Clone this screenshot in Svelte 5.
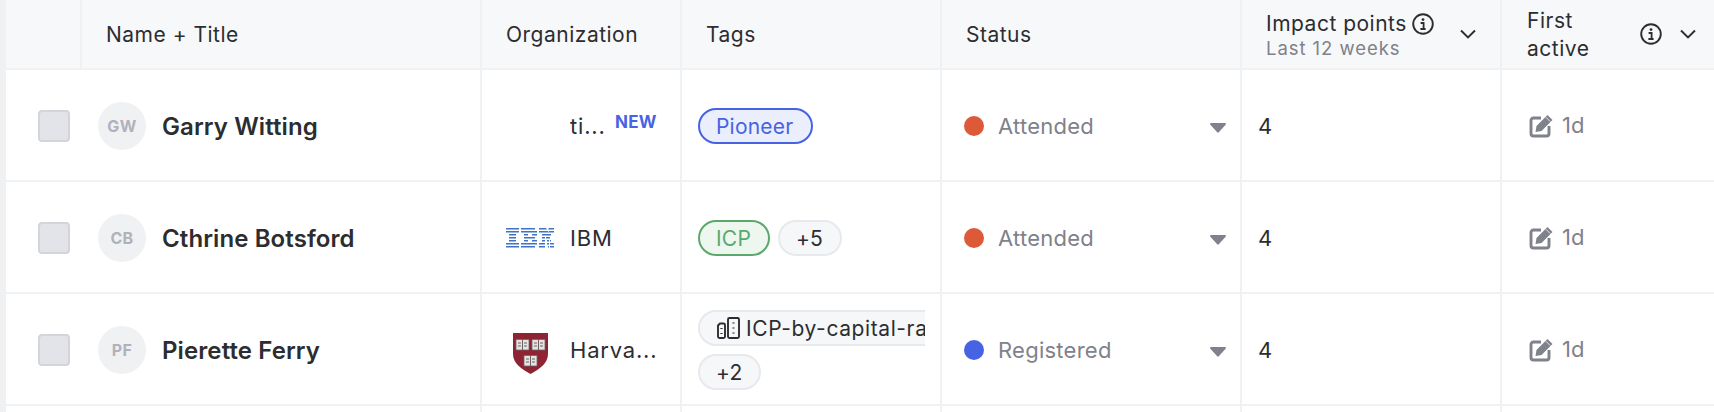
<script>
  const rows = [
    { initials: 'GW', name: 'Garry Witting', org: 'ti...', logo: 'none', isNew: true, status: 'Attended', tone: 'orange' },
    { initials: 'CB', name: 'Cthrine Botsford', org: 'IBM', logo: 'ibm', isNew: false, status: 'Attended', tone: 'orange' },
    { initials: 'PF', name: 'Pierette Ferry', org: 'Harva...', logo: 'harvard', isNew: false, status: 'Registered', tone: 'blue' }
  ];
</script>

{#snippet info()}
  <svg class="info" viewBox="0 0 22 22" fill="none">
    <circle cx="11" cy="11" r="9.8" stroke="#2c2d30" stroke-width="1.9" />
    <circle cx="11" cy="6.6" r="1.4" fill="#2c2d30" />
    <path d="M8.6 10h3v6M8.4 16h5.2" stroke="#2c2d30" stroke-width="1.8" />
  </svg>
{/snippet}

{#snippet chevron()}
  <svg class="chevron" viewBox="0 0 16 10" fill="none">
    <path d="M1 1.5 8 8.5 15 1.5" stroke="#2c2d30" stroke-width="1.9" />
  </svg>
{/snippet}

<div class="table">
  <div class="row head">
    <div class="cell"></div>
    <div class="cell name-head">Name + Title</div>
    <div class="cell org-head">Organization</div>
    <div class="cell tags-head">Tags</div>
    <div class="cell status-head">Status</div>
    <div class="cell impact-head">
      <div class="impact-text">
        <div class="impact-title"><span>Impact points</span>{@render info()}</div>
        <div class="sub">Last 12 weeks</div>
      </div>
      {@render chevron()}
    </div>
    <div class="cell first-head">
      <div class="first-text">First<br />active</div>
      {@render info()}
      {@render chevron()}
    </div>
  </div>

  {#each rows as r, i}
    <div class="row body">
      <div class="cell check-cell"><span class="check"></span></div>
      <div class="cell person">
        <span class="avatar">{r.initials}</span>
        <span class="name">{r.name}</span>
      </div>
      <div class="cell org">
        <span class="logo">
          {#if r.logo === 'ibm'}
            <svg viewBox="0 0 48 20" width="48" height="20">
              <g fill="#3f74c4">
                <path d="M0 0h13v1.6H0zM0 3h13v1.6H0zM3 6h7v1.6H3zM3 9h7v1.6H3zM3 12h7v1.6H3zM0 15h13v1.6H0zM0 18h13v1.6H0z" />
                <path d="M15 0h14v1.6H15zM15 3h16v1.6H15zM18 6h4v1.6h-4zM26 6h5v1.6h-5zM18 9h11v1.6H18zM18 12h4v1.6h-4zM26 12h5v1.6h-5zM15 15h16v1.6H15zM15 18h14v1.6H15z" />
                <path d="M33 0h7l1 1.6H33zM42 1.6 43 0h5v1.6zM33 3h9l.5 1.6H33zM42.5 4.6 43 3h5v1.6zM36 6h7v1.6h-7zM43 6h2v1.6h-2zM36 9h3v1.6h-3zM40 9h4v1.6h-4zM36 12h3v1.6h-3zM41 12h2v1.6h-2zM44 12h1v1.6h-1zM33 15h6v1.6h-6zM41 15h2v1.6h-2zM44 15h4v1.6h-4zM33 18h6v1.6h-6zM42 18h1v1.6h-1zM44 18h4v1.6h-4z" />
              </g>
            </svg>
          {:else if r.logo === 'harvard'}
            <svg class="shield" viewBox="0 0 35 41" width="35" height="41">
              <path d="M0 0h35v21c0 9-8 15-17.500 20C8 36 0 30 0 21z" fill="#8e2333" />
              <g fill="#e6e4e1" stroke="#6d6468" stroke-width="0.8">
                <path d="M3 6.500h13v10.500H3zM19 6.500h13v10.500H19zM11 22.500h13v10.500H11z" />
              </g>
              <g stroke="#6a5f64" stroke-width="1" fill="none">
                <path d="M9.500 6.500v10.500M25.500 6.500v10.500M17.500 22.500v10.500M5 10h3M11 10h3M21 10h3M27 10h3M5 13h3M11 13h3M21 13h3M27 13h3M13 26h3M19 26h3M13 29h3M19 29h3" />
              </g>
            </svg>
          {/if}
        </span>
        <span class="org-name">{r.org}</span>
        {#if r.isNew}<span class="new">NEW</span>{/if}
      </div>
      <div class="cell tags">
        {#if i === 0}
          <span class="pill pioneer">Pioneer</span>
        {:else if i === 1}
          <span class="pill icp">ICP</span>
          <span class="pill gray">+5</span>
        {:else}
          <span class="pill gray clipped">
            <svg class="building" viewBox="0 0 24 24" fill="none" stroke="#2c2d30" stroke-width="1.900">
              <path d="M4 7.500h3.500a1.500 1.500 0 0 1 1.500 1.500v11.500a1.500 1.500 0 0 1-1.500 1.500h-4A1.500 1.500 0 0 1 2 20.500V9.500z" />
              <rect x="12" y="2" width="11" height="20" rx="1.500" />
              <path d="M5.500 12v1M5.500 17v1M17.500 6.500v1M17.500 11.500v1M17.500 16.500v1" stroke-width="2.200" />
            </svg>
            <span class="clip-text">ICP-by-capital-raised</span>
          </span>
          <span class="pill gray">+2</span>
        {/if}
      </div>
      <div class="cell status">
        <span class="dot {r.tone}"></span>
        <span class="status-text">{r.status}</span>
        <svg class="caret" viewBox="0 0 16 10"><path d="M1.200 0h13.600c1 0 1.500 1.100.8 1.800L8.800 9.300c-.4.500-1.200.5-1.600 0L.4 1.800C-.3 1.100.2 0 1.200 0z" fill="#7f818b" /></svg>
      </div>
      <div class="cell impact">4</div>
      <div class="cell first">
        <svg class="edit" viewBox="0 0 25 25" fill="none">
          <path d="M12 5H4.500A2.500 2.500 0 0 0 2 7.500v13A2.500 2.500 0 0 0 4.500 23h13a2.500 2.500 0 0 0 2.500-2.500V13" stroke="#7f818b" stroke-width="2.900" />
          <path d="M7.500 13 18.500 2 23.500 7 12.500 18l-6 1z" fill="#7f818b" />
          <path d="M17 4.300l4.300 4.300" stroke="#fff" stroke-width="0.8" />
        </svg>
        <span>1d</span>
      </div>
    </div>
  {/each}

  <div class="row body">
    <div class="cell"></div>
    <div class="cell"></div>
    <div class="cell"></div>
    <div class="cell"></div>
    <div class="cell"></div>
    <div class="cell"></div>
    <div class="cell"></div>
  </div>
</div>

<style>
  :global(body) {
    margin: 0;
    background: #fff;
  }
  .table {
    height: 412px;
    overflow: hidden;
    padding-left: 6px;
    background: #f0f1f3;
    font-family: Inter, "Liberation Sans", sans-serif;
    color: #2c2d30;
  }
  .row {
    display: grid;
    grid-template-columns: 76px 400px 200px 260px 300px 260px 212px;
    background: #fff;
    border-bottom: 2px solid #f0f1f3;
  }
  .head {
    height: 68px;
    background: #f7f8fa;
    font-size: 21px;
    letter-spacing: 0.5px;
  }
  .body {
    height: 110px;
  }
  .cell {
    display: flex;
    align-items: center;
    min-width: 0;
    border-right: 2px solid #f0f1f3;
  }
  .body .cell {
    padding-top: 2px;
  }
  .cell:last-child {
    border-right: 0;
  }
  .body .cell:first-child {
    border-right: 0;
  }
  .name-head { padding-left: 24px; }
  .org-head { padding-left: 24px; }
  .tags-head { padding-left: 24px; }
  .status-head { padding-left: 24px; }
  .impact-head {
    padding-left: 24px;
  }
  .impact-text {
    padding-top: 4px;
  }
  .impact-title {
    display: flex;
    align-items: center;
    gap: 5px;
    line-height: 25px;
  }
  .sub {
    color: #7f818b;
    font-size: 18.5px;
    line-height: 25px;
    letter-spacing: 0.95px;
  }
  .impact-head > .chevron {
    margin-left: 26px;
  }
  .first-head {
    padding-left: 25px;
  }
  .first-text {
    width: 113px;
    padding-top: 2px;
    line-height: 28px;
  }
  .first-head .chevron {
    margin-left: 18px;
  }
  .info {
    width: 22px;
    height: 22px;
    flex: none;
  }
  .chevron {
    width: 16px;
    height: 10px;
    flex: none;
  }
  .check-cell {
    padding-left: 32px;
  }
  .check {
    box-sizing: border-box;
    width: 32px;
    height: 32px;
    background: #e3e4e9;
    border: 2px solid #d3d5db;
    border-radius: 4px;
  }
  .person {
    padding-left: 16px;
    gap: 16px;
  }
  .avatar {
    display: flex;
    align-items: center;
    justify-content: center;
    width: 48px;
    height: 48px;
    flex: none;
    border-radius: 50%;
    background: #f0f1f3;
    color: #b0b2bb;
    font-size: 16px;
    font-weight: 700;
    letter-spacing: 0.4px;
  }
  .name {
    font-size: 24px;
    font-weight: 600;
    letter-spacing: 0.1px;
  }
  .org {
    padding-left: 24px;
    font-size: 22px;
    letter-spacing: 0.8px;
    position: relative;
  }
  .logo {
    display: flex;
    align-items: center;
    justify-content: center;
    width: 48px;
    height: 42px;
    margin-right: 16px;
  }
  .shield {
    margin-top: 6px;
  }
  .new {
    position: absolute;
    left: 133px;
    top: 42px;
    font-size: 17px;
    font-weight: 700;
    color: #4763e4;
    letter-spacing: 0.2px;
  }
  .tags {
    padding: 2px 15px 0 16px;
    flex-wrap: wrap;
    align-content: center;
    column-gap: 8px;
    row-gap: 8px;
    overflow: hidden;
  }
  .pill {
    box-sizing: border-box;
    display: inline-flex;
    align-items: center;
    height: 36px;
    padding: 0 17px 0 16px;
    border: 2px solid;
    border-radius: 18px;
    font-size: 21px;
    letter-spacing: 0.2px;
    white-space: nowrap;
  }
  .pioneer {
    padding-right: 18px;
    color: #4763e4;
    border-color: #4763e4;
    background: #ebeefc;
  }
  .icp {
    color: #5aa96a;
    border-color: #5aa96a;
    background: #eef6f0;
  }
  .gray {
    color: #2c2d30;
    border-color: #e8e9ec;
    background: #f6f7f9;
  }
  .clipped {
    max-width: 229px;
    overflow: hidden;
    justify-content: flex-start;
    border-right: 0;
    border-radius: 18px 0 0 18px;
    gap: 6px;
  }
  .clip-text {
    letter-spacing: 0.6px;
  }
  .building {
    width: 24px;
    height: 24px;
    flex: none;
  }
  .status {
    padding-left: 22px;
    font-size: 22px;
    color: #7f818b;
  }
  .dot {
    width: 20px;
    height: 20px;
    border-radius: 50%;
    margin-right: 14px;
    flex: none;
  }
  .dot.orange { background: #dd5a38; }
  .dot.blue { background: #4763e4; }
  .status-text {
    flex: 1;
    letter-spacing: 0.25px;
  }
  .caret {
    width: 16px;
    height: 10px;
    margin: 4px 14px 0 0;
    flex: none;
  }
  .impact {
    padding-left: 16px;
    font-size: 22px;
  }
  .body .first {
    padding-top: 0;
    padding-left: 27px;
    font-size: 22px;
    color: #7f818b;
    gap: 8px;
  }
  .edit {
    width: 25px;
    height: 25px;
  }
</style>
